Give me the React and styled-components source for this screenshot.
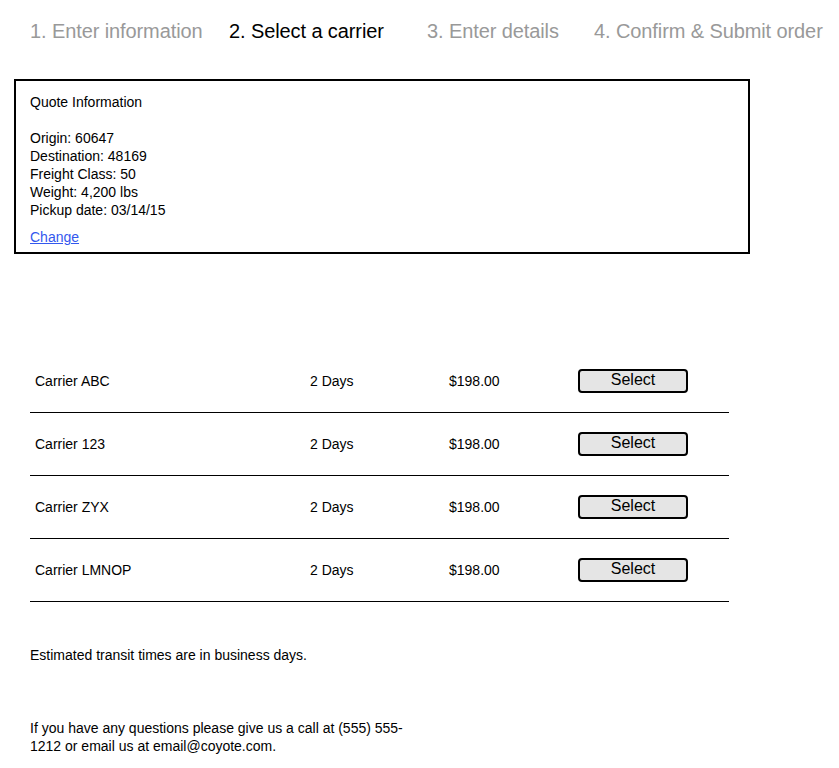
import React from "react";
import styled, { createGlobalStyle } from "styled-components";

const Global = createGlobalStyle`
  html, body { margin: 0; padding: 0; background: #fff; }
  body { font-family: "Liberation Sans", Arial, Helvetica, sans-serif; color: #000; }
`;

const Page = styled.div`
  width: 839px;
  padding-bottom: 20px;
`;

const Steps = styled.ol`
  display: flex;
  list-style: none;
  margin: 0;
  padding: 20px 0 0 30px;
  height: 59px;
  box-sizing: border-box;
`;

const Step = styled.li`
  flex: 0 0 ${(p) => p.$w || "auto"};
  font-size: 20px;
  line-height: 23px;
  letter-spacing: -0.1px;
  white-space: nowrap;
  color: ${(p) => (p.$active ? "#000" : "#999")};
`;

const QuoteBox = styled.section`
  margin: 20px 0 0 14px;
  width: 736px;
  height: 175px;
  box-sizing: border-box;
  border: 2px solid #000;
  padding: 12px 14px;
  font-size: 14px;
  line-height: 18px;
`;

const QuoteTitle = styled.div`
  margin-bottom: 18px;
`;

const QuoteLine = styled.div``;

const ChangeLink = styled.a`
  display: inline-block;
  margin-top: 9px;
  color: #3358ee;
  text-decoration: underline;
  cursor: pointer;
`;

const Table = styled.div`
  margin: 96px 0 0 30px;
  width: 699px;
`;

const Row = styled.div`
  display: grid;
  grid-template-columns: 275px 139px 129px 110px;
  align-items: center;
  height: 63px;
  box-sizing: border-box;
  padding-left: 5px;
  border-bottom: 1px solid #000;
  font-size: 14px;
  line-height: 18px;
`;

const Cell = styled.div``;

const SelectButton = styled.button`
  width: 110px;
  height: 24px;
  box-sizing: border-box;
  border: 2px solid #000;
  border-radius: 4px;
  background: #e5e5e5;
  font-family: "Liberation Sans", Arial, sans-serif;
  font-size: 16px;
  line-height: 18px;
  padding: 0 0 2px;
  color: #000;
  cursor: pointer;
`;

const Note = styled.p`
  margin: ${(p) => p.$mt || 0} 0 0 30px;
  font-size: 14px;
  line-height: 18px;
  max-width: ${(p) => p.$max || "none"};
`;

const carriers = ["Carrier ABC", "Carrier 123", "Carrier ZYX", "Carrier LMNOP"];

export default function App() {
  return (
    <Page>
      <Global />
      <Steps>
        <Step $w="199px">1. Enter information</Step>
        <Step $w="198px" $active>2. Select a carrier</Step>
        <Step $w="167px">3. Enter details</Step>
        <Step>4. Confirm &amp; Submit order</Step>
      </Steps>
      <QuoteBox>
        <QuoteTitle>Quote Information</QuoteTitle>
        <QuoteLine>Origin: 60647</QuoteLine>
        <QuoteLine>Destination: 48169</QuoteLine>
        <QuoteLine>Freight Class: 50</QuoteLine>
        <QuoteLine>Weight: 4,200 lbs</QuoteLine>
        <QuoteLine>Pickup date: 03/14/15</QuoteLine>
        <ChangeLink>Change</ChangeLink>
      </QuoteBox>
      <Table>
        {carriers.map((c) => (
          <Row key={c}>
            <Cell>{c}</Cell>
            <Cell>2 Days</Cell>
            <Cell>$198.00</Cell>
            <SelectButton>Select</SelectButton>
          </Row>
        ))}
      </Table>
      <Note $mt="44px">Estimated transit times are in business days.</Note>
      <Note $mt="55px" $max="390px">
        If you have any questions please give us a call at (555) 555-1212 or email us at email@coyote.com.
      </Note>
    </Page>
  );
}
